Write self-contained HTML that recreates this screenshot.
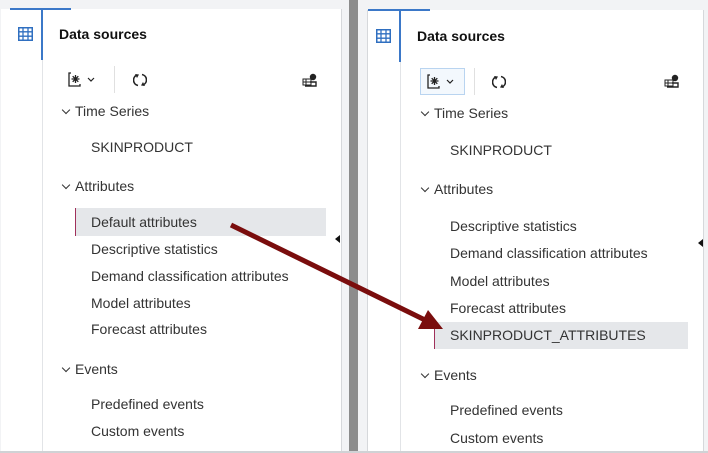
<!DOCTYPE html>
<html><head><style>
*{margin:0;padding:0;box-sizing:border-box}
body{width:708px;height:453px;overflow:hidden;background:#f2f3f5;position:relative;font-family:"Liberation Sans",sans-serif;color:#333}
.a{position:absolute}
.t{position:absolute;font-size:14px;white-space:nowrap;line-height:16px}
.h{position:absolute;font-size:14px;font-weight:bold;color:#111;line-height:16px}
.chev{position:absolute;width:6px;height:6px;border-right:1.3px solid #333;border-bottom:1.3px solid #333;transform:rotate(45deg)}
</style></head><body>
<div class="a" style="left:1px;top:9px;width:341px;height:443px;background:#fff;border-right:1px solid #d6d8db"></div>
<div class="a" style="left:10px;top:8px;width:61px;height:2px;background:#3b78c8"></div>
<div class="a" style="left:41px;top:10px;width:2px;height:50px;background:#3b78c8"></div>
<div class="a" style="left:42px;top:60px;width:1px;height:392px;background:#e2e4e7"></div>
<div class="a" style="left:349px;top:0;width:9px;height:453px;background:#8c8c8c"></div>
<div class="a" style="left:367px;top:10px;width:337px;height:442px;background:#fff;border-left:1px solid #d6d8db;border-right:1px solid #d6d8db"></div>
<div class="a" style="left:368px;top:9px;width:62px;height:2px;background:#3b78c8"></div>
<div class="a" style="left:399px;top:11px;width:2px;height:51px;background:#3b78c8"></div>
<div class="a" style="left:400px;top:62px;width:1px;height:390px;background:#e2e4e7"></div>
<div class="a" style="left:0;top:451px;width:708px;height:2px;background:#d0d2d5"></div>

<svg class="a" style="left:18px;top:27px" width="15" height="14"><rect x="0.75" y="0.75" width="13.5" height="12.5" fill="none" stroke="#2f6fc0" stroke-width="1.5"/><path d="M0 4.8H15M0 9.2H15M5 0V14M10 0V14" stroke="#2f6fc0" stroke-width="1.3"/></svg>
<svg class="a" style="left:376px;top:29px" width="15" height="14"><rect x="0.75" y="0.75" width="13.5" height="12.5" fill="none" stroke="#2f6fc0" stroke-width="1.5"/><path d="M0 4.8H15M0 9.2H15M5 0V14M10 0V14" stroke="#2f6fc0" stroke-width="1.3"/></svg>

<div class="h" style="left:59px;top:26px">Data sources</div>
<div class="h" style="left:417px;top:28px">Data sources</div>

<svg class="a" style="left:68px;top:72px" width="30" height="16"><path d="M3 1H1V14H12V12" fill="none" stroke="#222" stroke-width="1.3"/><path d="M7.5 3V11M3.5 7H11.5M4.7 4.2L10.3 9.8M10.3 4.2L4.7 9.8" stroke="#222" stroke-width="1.3"/><path d="M20 6l3 3 3-3" fill="none" stroke="#222" stroke-width="1.2"/></svg>
<div class="a" style="left:114px;top:66px;width:1px;height:27px;background:#e0e0e0"></div>
<svg class="a" style="left:133px;top:73px" width="14" height="14"><path d="M4 2A5.5 5.5 0 0 0 5 12.5M10 12A5.5 5.5 0 0 0 9 1.5" fill="none" stroke="#222" stroke-width="1.6"/><path d="M2 1L6 1.5 4 5z M12 13L8 12.5 10 9z" fill="#222"/></svg>
<svg class="a" style="left:302px;top:73px" width="16" height="16"><rect x="1" y="6" width="8" height="6" fill="none" stroke="#222"/><path d="M1 9H9M4 6V12" stroke="#222"/><circle cx="11" cy="4" r="3.2" fill="#222"/><path d="M8 9h6v4H3" fill="none" stroke="#222" stroke-width="1.4"/></svg>

<div class="a" style="left:420px;top:68px;width:45px;height:27px;border:1px solid #b9d4f0;background:#f3f8fd"></div>
<svg class="a" style="left:427px;top:74px" width="30" height="16"><path d="M3 1H1V14H12V12" fill="none" stroke="#222" stroke-width="1.3"/><path d="M7.5 3V11M3.5 7H11.5M4.7 4.2L10.3 9.8M10.3 4.2L4.7 9.8" stroke="#222" stroke-width="1.3"/><path d="M20 6l3 3 3-3" fill="none" stroke="#222" stroke-width="1.2"/></svg>
<div class="a" style="left:474px;top:68px;width:1px;height:27px;background:#e0e0e0"></div>
<svg class="a" style="left:492px;top:75px" width="14" height="14"><path d="M4 2A5.5 5.5 0 0 0 5 12.5M10 12A5.5 5.5 0 0 0 9 1.5" fill="none" stroke="#222" stroke-width="1.6"/><path d="M2 1L6 1.5 4 5z M12 13L8 12.5 10 9z" fill="#222"/></svg>
<svg class="a" style="left:664px;top:74px" width="16" height="16"><rect x="1" y="6" width="8" height="6" fill="none" stroke="#222"/><path d="M1 9H9M4 6V12" stroke="#222"/><circle cx="11" cy="4" r="3.2" fill="#222"/><path d="M8 9h6v4H3" fill="none" stroke="#222" stroke-width="1.4"/></svg>

<div class="a" style="left:75px;top:208px;width:251px;height:28px;background:#e5e7ea;border-left:1px solid #a0305a"></div>
<div class="a" style="left:434px;top:322px;width:254px;height:27px;background:#e5e7ea;border-left:1px solid #a0305a"></div>

<div class="chev" style="left:63px;top:107px"></div><div class="t" style="left:75px;top:103px">Time Series</div>
<div class="t" style="left:91px;top:139px">SKINPRODUCT</div>
<div class="chev" style="left:63px;top:182px"></div><div class="t" style="left:75px;top:178px">Attributes</div>
<div class="t" style="left:91px;top:214px">Default attributes</div>
<div class="t" style="left:91px;top:241px">Descriptive statistics</div>
<div class="t" style="left:91px;top:268px">Demand classification attributes</div>
<div class="t" style="left:91px;top:295px">Model attributes</div>
<div class="t" style="left:91px;top:321px">Forecast attributes</div>
<div class="chev" style="left:63px;top:365px"></div><div class="t" style="left:75px;top:361px">Events</div>
<div class="t" style="left:91px;top:396px">Predefined events</div>
<div class="t" style="left:91px;top:423px">Custom events</div>

<div class="chev" style="left:422px;top:109px"></div><div class="t" style="left:434px;top:105px">Time Series</div>
<div class="t" style="left:450px;top:142px">SKINPRODUCT</div>
<div class="chev" style="left:422px;top:185px"></div><div class="t" style="left:434px;top:181px">Attributes</div>
<div class="t" style="left:450px;top:218px">Descriptive statistics</div>
<div class="t" style="left:450px;top:245px">Demand classification attributes</div>
<div class="t" style="left:450px;top:273px">Model attributes</div>
<div class="t" style="left:450px;top:300px">Forecast attributes</div>
<div class="t" style="left:450px;top:327px">SKINPRODUCT_ATTRIBUTES</div>
<div class="chev" style="left:422px;top:371px"></div><div class="t" style="left:434px;top:367px">Events</div>
<div class="t" style="left:450px;top:402px">Predefined events</div>
<div class="t" style="left:450px;top:430px">Custom events</div>

<svg class="a" style="left:335px;top:235px" width="6" height="8"><path d="M5 0V8L0 4z" fill="#111"/></svg>
<svg class="a" style="left:698px;top:239px" width="6" height="8"><path d="M5 0V8L0 4z" fill="#111"/></svg>

<svg class="a" style="left:0;top:0" width="708" height="453"><line x1="231" y1="225" x2="425" y2="320" stroke="#7a0d0d" stroke-width="5"/><path d="M443 329L418 329 428 310z" fill="#7a0d0d"/></svg>
</body></html>
